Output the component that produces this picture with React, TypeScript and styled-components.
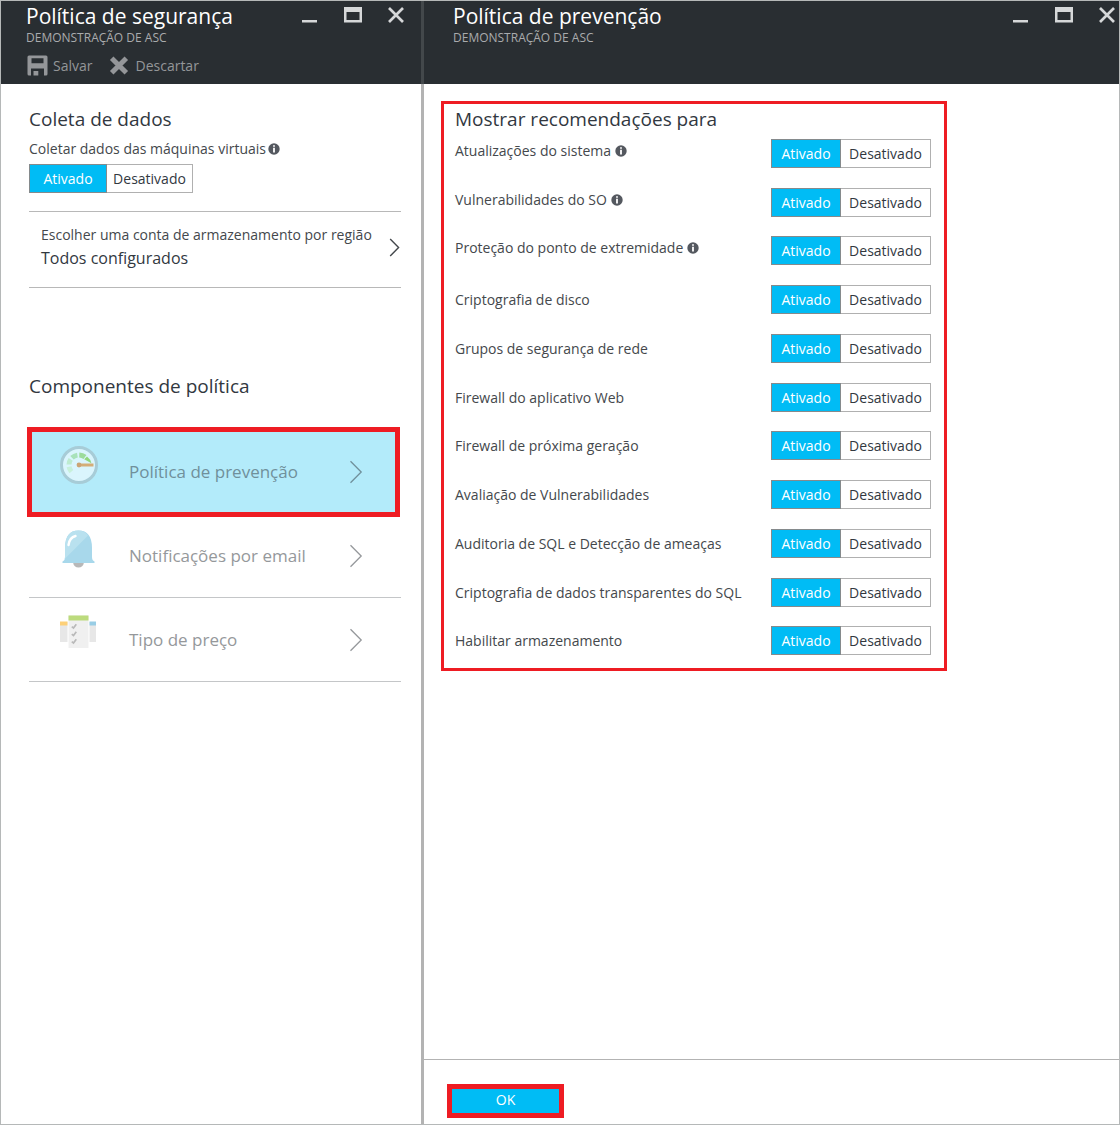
import React, { useState } from "react";
import styled, { createGlobalStyle } from "styled-components";

const GlobalStyle = createGlobalStyle`
  *, *::before, *::after { box-sizing: border-box; }
  body {
    margin: 0;
    background: #fff;
    color: #32383f;
    font-family: "Open Sans", "Noto Sans", sans-serif;
    font-size: 14px;
    line-height: 20px;
  }
  h1, h2, p, ul { margin: 0; padding: 0; font-weight: 400; }
  button { font: inherit; cursor: pointer; }
`;

const Workspace = styled.div`
  display: grid;
  grid-template-columns: 423px minmax(0, 1fr);
  min-height: 100vh;
  border: 1px solid #b5b8b8;
`;

const Blade = styled.section<{ $divided?: boolean }>`
  display: flex;
  flex-direction: column;
  border-right: ${(p) => (p.$divided ? "3px solid #b3b3b3" : "0")};
`;

const Header = styled.header<{ $divided?: boolean; $edge: number }>`
  display: flex;
  justify-content: space-between;
  align-items: flex-start;
  height: 83px;
  margin-right: ${(p) => (p.$divided ? "-3px" : "0")};
  border-right: ${(p) => (p.$divided ? "3px solid #43484b" : "0")};
  padding: 2px ${(p) => p.$edge}px 0 ${(p) => (p.$divided ? "25px" : "29px")};
  background: #292e32;
`;

const Title = styled.h1`
  color: #fff;
  font-size: 21px;
  line-height: 27px;
`;

const Subtitle = styled.p`
  color: #a9abad;
  font-size: 12px;
  line-height: 16px;
`;

const Toolbar = styled.div`
  display: flex;
  gap: 17px;
  margin-top: 9px;
  padding-left: 1px;
`;

const ToolButton = styled.button`
  display: flex;
  align-items: center;
  gap: 5px;
  padding: 0;
  border: 0;
  background: none;
  color: #949699;
`;

const WindowButtons = styled.div`
  display: flex;
  gap: 25px;
  padding-top: 3px;
`;

const WindowButton = styled.button`
  display: flex;
  padding: 0;
  border: 0;
  background: none;
  color: #d6d8d9;
`;

const PolicyBody = styled.div`
  padding: 23px 20px 0 28px;
`;

const Heading = styled.h2`
  font-size: 19px;
  line-height: 24px;
`;

const FieldLabel = styled.div`
  display: flex;
  align-items: center;
  gap: 2px;
  padding: 8px 0 5px;
  color: #44484c;
`;

const Segments = styled.div<{ $columns: string }>`
  display: grid;
  grid-template-columns: ${(p) => p.$columns};
  width: max-content;
  height: 29px;
`;

const Segment = styled.label`
  display: grid;
  place-items: center;
  border: 1px solid #b0b0b0;
  line-height: 26px;
  cursor: pointer;

  & + & { border-left: 0; }

  &:has(input:checked) {
    border: 1px solid #858a8c;
    background: #00bcf5;
    color: #fff;
  }
`;

const SegmentInput = styled.input`
  grid-area: 1 / 1;
  place-self: stretch;
  margin: 0;
  appearance: none;
  cursor: pointer;
`;

const SegmentText = styled.span`
  grid-area: 1 / 1;
`;

const StorageLink = styled.a`
  display: flex;
  justify-content: space-between;
  align-items: center;
  height: 77px;
  margin: 18px 0 86px;
  padding: 0 1px 4px 12px;
  border: solid #b8b8b8;
  border-width: 1px 0;
  color: #44484c;
  text-decoration: none;
`;

const StorageValue = styled.div`
  color: #32383f;
  font-size: 16px;
  line-height: 26px;
`;

const Components = styled.ul`
  padding-top: 32px;
  list-style: none;
`;

const ComponentItem = styled.li<{ $selected: boolean }>`
  height: ${(p) => (p.$selected ? "90px" : "84px")};
  margin: ${(p) => (p.$selected ? "-3px 1px -3px -2px" : "0")};
  border: solid #c4c6c8;
  border-width: 0 0 1px;
  ${(p) => p.$selected && "border: 5px solid #ee1c23; background: #b3ebfa;"}
`;

const ComponentLink = styled.a<{ $selected: boolean }>`
  display: grid;
  grid-template-columns: 38px 1fr 14px;
  column-gap: 31px;
  align-items: center;
  height: 100%;
  padding: 0 ${(p) => (p.$selected ? "32px 0 28px" : "38px 0 31px")};
  color: ${(p) => (p.$selected ? "#70909b" : "#95989b")};
  font-size: 17px;
  line-height: 24px;
  text-decoration: none;
`;

const ComponentIcon = styled.span`
  display: flex;
  padding-bottom: 14px;
`;

const Recommendations = styled.div`
  max-width: 506px;
  margin: 17px 17px 0;
  padding: 3px 13px 13px 11px;
  border: 3px solid #ee1c23;
`;

const RowList = styled.div`
  padding-top: 8px;
`;

/* The rows step by 48.75px, so every fourth gap is one pixel shorter. */
const Row = styled.div`
  display: flex;
  justify-content: space-between;
  align-items: flex-start;
  height: 49px;

  &:nth-child(4n + 2) { height: 48px; }
  &:last-child { height: 29px; }
`;

const RowLabel = styled.div<{ $hint: boolean }>`
  display: flex;
  align-items: center;
  gap: 4px;
  padding-top: ${(p) => (p.$hint ? "2px" : "5px")};
  color: #44484c;
`;

const Footer = styled.footer`
  margin-top: auto;
  padding: 24px 23px 6px;
  border-top: 1px solid #b3b3b3;
`;

const OkButton = styled.button`
  display: block;
  width: 117px;
  height: 34px;
  padding: 0 0 2px;
  border: 5px solid #ee1c23;
  background: #00bcf5;
  color: #fff;
  line-height: 20px;
`;

const InfoIcon = () => (
  <svg width="12" height="12" viewBox="0 0 12 12" aria-hidden="true">
    <circle cx="6" cy="6" r="5.7" fill="#54585f" />
    <path d="M5.1 2.2h1.8v1.6H5.1zM5.1 4.8h1.8v4.6H5.1z" fill="#fff" />
  </svg>
);

const Chevron = ({ small }: { small?: boolean }) => (
  <svg width={small ? 11 : 14} height={small ? 19 : 24} viewBox="0 0 14 24" preserveAspectRatio="none" fill="none" stroke="currentColor" strokeWidth={small ? 1.8 : 1.3} aria-hidden="true">
    <path d="M1.5 1.2 12.2 12 1.5 22.8" />
  </svg>
);

const SaveIcon = () => (
  <svg width="21" height="21" viewBox="0 0 21 21" fill="currentColor" aria-hidden="true">
    <path fillRule="evenodd" d="M2 0.5H19Q20.5 0.5 20.5 2V19Q20.5 20.5 19 20.5H17V13.5H4V20.5H2Q0.5 20.5 0.5 19V2Q0.5 0.5 2 0.5ZM4.5 3.2V8.3H16.5V3.2Z" />
    <path d="M6.5 16h4.8v4.5H6.5z" />
  </svg>
);

const DiscardIcon = () => (
  <svg width="21" height="19" viewBox="0 0 21 19" stroke="currentColor" strokeWidth="5" aria-hidden="true">
    <path d="M2.7 2.2 17.3 16.8M17.3 2.2 2.7 16.8" />
  </svg>
);

const GaugeIcon = () => (
  <svg width="38" height="38" viewBox="0 0 38 38" fill="none" aria-hidden="true">
    <circle cx="19" cy="19" r="17.5" fill="#daf5fd" stroke="#a7ccd7" strokeWidth="3" />
    <path d="M11.4 25.6A10 10 0 0 1 9.1 20.8" stroke="#c7f0da" strokeWidth="5" />
    <path d="M9 18.5A10 10 0 0 1 10.7 13.3" stroke="#bdebd0" strokeWidth="5" />
    <path d="M12 11.8A10 10 0 0 1 17.4 9.1" stroke="#a9e2bb" strokeWidth="5" />
    <path d="M19.3 9A10 10 0 0 1 25 11" stroke="#9cdb9b" strokeWidth="5" />
    <path d="M24.2 13.2 27 10.4Q30.5 13 31.4 17.2Z" fill="#91d67c" />
    <path d="M18.5 19H33.5" stroke="#d4ad78" strokeWidth="3" />
    <circle cx="19" cy="19" r="2.4" fill="#cba475" />
  </svg>
);

const BellIcon = () => (
  <svg width="38" height="38" viewBox="0 0 38 38" aria-hidden="true">
    <path d="M13 32.5h11q-1 5-5.5 5t-5.5-5Z" fill="#b8b8b8" />
    <path d="M5 18Q5 0.5 18.5 0.5T32 18V27Q32 30.500 34.500 31.500V33H2.500V31.500Q5 30.500 5 27Z" fill="#a8d8eb" />
    <path d="M28 5.500Q24.500 0.500 18.500 0.500 5 0.500 5 18V27L4.700 29Z" fill="#b9e1ef" />
    <path d="M8.500 15Q9.500 7.500 15.500 6" fill="none" stroke="#fff" strokeWidth="2.4" strokeLinecap="round" />
  </svg>
);

const ChecklistIcon = () => (
  <svg width="38" height="36" viewBox="0 0 38 36" aria-hidden="true">
    <path d="M0 7h7.500v20H0zM29.500 7h6.500v20h-6.500z" fill="#e7e7e7" />
    <path d="M0 6.500h7.500v4H0z" fill="#fdd078" />
    <path d="M29.500 6.500h6.500v4h-6.500z" fill="#98cde5" />
    <path d="M8.500 0.500h20v32.500h-20z" fill="#f0f0f0" />
    <path d="M8.500 0.500h20v5h-20z" fill="#bcdb7d" />
    <path d="m11.800 11.600 1.700 1.500 2.800-3.800M11.800 19.100l1.700 1.500 2.800-3.800M11.800 26.600l1.700 1.500 2.800-3.800" fill="none" stroke="#b9b9b9" strokeWidth="1.7" />
  </svg>
);

const WindowControls = () => (
  <WindowButtons>
    <WindowButton aria-label="Minimizar">
      <svg width="18" height="18" viewBox="0 0 18 18" fill="currentColor" aria-hidden="true"><path d="M1 14h15v2.500H1z" /></svg>
    </WindowButton>
    <WindowButton aria-label="Maximizar">
      <svg width="18" height="18" viewBox="0 0 18 18" fill="currentColor" aria-hidden="true"><path fillRule="evenodd" d="M0 1h18v15.500H0zM2.500 6v8h13V6z" /></svg>
    </WindowButton>
    <WindowButton aria-label="Fechar">
      <svg width="18" height="18" viewBox="0 0 18 18" fill="none" stroke="currentColor" strokeWidth="2.7" aria-hidden="true"><path d="M2 2 16 16M16 2 2 16" /></svg>
    </WindowButton>
  </WindowButtons>
);

function Toggle({ name, label, columns = "70px 90px" }: { name: string; label: string; columns?: string }) {
  const [value, setValue] = useState("Ativado");
  return (
    <Segments role="radiogroup" aria-label={label} $columns={columns}>
      {["Ativado", "Desativado"].map((option) => (
        <Segment key={option}>
          <SegmentInput type="radio" name={name} checked={value === option} onChange={() => setValue(option)} />
          <SegmentText>{option}</SegmentText>
        </Segment>
      ))}
    </Segments>
  );
}

const recommendations = [
  { label: "Atualizações do sistema", hint: true },
  { label: "Vulnerabilidades do SO", hint: true },
  { label: "Proteção do ponto de extremidade", hint: true },
  { label: "Criptografia de disco", hint: false },
  { label: "Grupos de segurança de rede", hint: false },
  { label: "Firewall do aplicativo Web", hint: false },
  { label: "Firewall de próxima geração", hint: false },
  { label: "Avaliação de Vulnerabilidades", hint: false },
  { label: "Auditoria de SQL e Detecção de ameaças", hint: false },
  { label: "Criptografia de dados transparentes do SQL", hint: false },
  { label: "Habilitar armazenamento", hint: false },
];

const policyComponents = [
  { label: "Política de prevenção", icon: <GaugeIcon />, selected: true },
  { label: "Notificações por email", icon: <BellIcon />, selected: false },
  { label: "Tipo de preço", icon: <ChecklistIcon />, selected: false },
];

export default function App() {
  return (
    <>
      <GlobalStyle />
      <Workspace>
        <Blade $divided>
          <Header $divided $edge={16}>
            <div>
              <Title>Política de segurança</Title>
              <Subtitle>DEMONSTRAÇÃO DE ASC</Subtitle>
              <Toolbar>
                <ToolButton><SaveIcon />Salvar</ToolButton>
                <ToolButton><DiscardIcon />Descartar</ToolButton>
              </Toolbar>
            </div>
            <WindowControls />
          </Header>
          <PolicyBody>
            <Heading>Coleta de dados</Heading>
            <FieldLabel>Coletar dados das máquinas virtuais<InfoIcon /></FieldLabel>
            <Toggle name="collection" label="Coletar dados das máquinas virtuais" columns="78px 86px" />
            <StorageLink href="#storage">
              <div>
                Escolher uma conta de armazenamento por região
                <StorageValue>Todos configurados</StorageValue>
              </div>
              <Chevron small />
            </StorageLink>
            <Heading>Componentes de política</Heading>
            <Components>
              {policyComponents.map(({ label, icon, selected }) => (
                <ComponentItem key={label} $selected={selected}>
                  <ComponentLink href="#component" $selected={selected}>
                    <ComponentIcon>{icon}</ComponentIcon>
                    {label}
                    <Chevron />
                  </ComponentLink>
                </ComponentItem>
              ))}
            </Components>
          </PolicyBody>
        </Blade>
        <Blade>
          <Header $edge={3}>
            <div>
              <Title>Política de prevenção</Title>
              <Subtitle>DEMONSTRAÇÃO DE ASC</Subtitle>
            </div>
            <WindowControls />
          </Header>
          <Recommendations>
            <Heading>Mostrar recomendações para</Heading>
            <RowList>
              {recommendations.map(({ label, hint }, index) => (
                <Row key={label}>
                  <RowLabel $hint={hint}>{label}{hint && <InfoIcon />}</RowLabel>
                  <Toggle name={`recommendation-${index}`} label={label} />
                </Row>
              ))}
            </RowList>
          </Recommendations>
          <Footer>
            <OkButton>OK</OkButton>
          </Footer>
        </Blade>
      </Workspace>
    </>
  );
}
